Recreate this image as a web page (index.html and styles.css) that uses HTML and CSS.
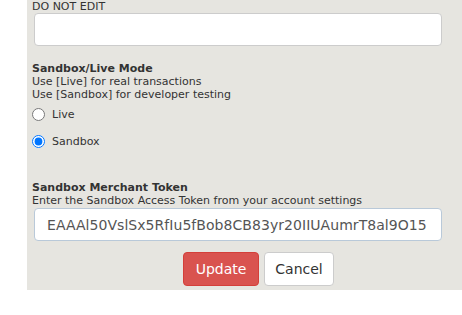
FILE: index.html
```html
<!DOCTYPE html>
<html lang="en">
<head>
    <meta charset="UTF-8">
    <meta name="viewport" content="width=device-width, initial-scale=1.0">
    <title>Payment Settings</title>
    <link rel="stylesheet" href="styles.css">
</head>
<body>
    <div class="settings-panel">
        <form id="settingsForm">
            <div class="field">
                <label class="field-label">DO NOT EDIT</label>
                <input type="text" class="text-input plain" name="hidden_key" value="">
            </div>

            <div class="field mode-field">
                <div class="field-title">Sandbox/Live Mode</div>
                <div class="field-help">Use [Live] for real transactions</div>
                <div class="field-help">Use [Sandbox] for developer testing</div>
                <label class="radio-row first">
                    <input type="radio" name="mode" value="live"> Live
                </label>
                <label class="radio-row">
                    <input type="radio" name="mode" value="sandbox" checked> Sandbox
                </label>
            </div>

            <div class="field token-field">
                <div class="field-title">Sandbox Merchant Token</div>
                <div class="field-help">Enter the Sandbox Access Token from your account settings</div>
                <input type="text" class="text-input token" name="sandbox_token" value="EAAAl50VslSx5RfIu5fBob8CB83yr20IIUAumrT8al9O15">
            </div>

            <div class="button-row">
                <button type="submit" class="update-btn">Update</button>
                <button type="button" class="cancel-btn">Cancel</button>
            </div>
        </form>
    </div>
</body>
</html>
```

FILE: styles.css
```css
body {
    font-family: "DejaVu Sans", Verdana, sans-serif;
    background-color: #fff;
    margin: 0;
    padding: 0;
    color: #333;
}
.settings-panel {
    margin-left: 27px;
    background-color: #e6e5e0;
    padding: 0 20px 0 5px;
    height: 290px;
}
.field-label {
    display: block;
    font-size: 11px;
    line-height: 13px;
    color: #333;
}
.text-input {
    display: block;
    box-sizing: border-box;
    width: 408px;
    margin-left: 2px;
    background-color: #fff;
    border-radius: 4px;
    font-family: "DejaVu Sans", Verdana, sans-serif;
}
.text-input.plain {
    height: 33px;
    margin-top: 0;
    border: 1px solid #ccc;
}
.mode-field {
    margin-top: 16px;
}
.field-title {
    font-size: 11px;
    font-weight: bold;
    line-height: 13px;
    color: #333;
}
.field-help {
    font-size: 11px;
    line-height: 13px;
    color: #333;
}
.radio-row {
    display: flex;
    align-items: center;
    font-size: 11px;
    height: 27px;
    color: #333;
}
.radio-row input {
    margin: 0 7px 0 0;
    width: 13px;
    height: 13px;
}
.radio-row.first {
    margin-top: 0;
}
.token-field {
    margin-top: 26px;
}
.text-input.token {
    height: 33px;
    margin-top: 1px;
    border: 1px solid #b9c9d9;
    padding: 0 12px;
    font-size: 14px;
    letter-spacing: 0.05px;
    color: #555;
}
.button-row {
    display: flex;
    gap: 5px;
    margin-top: 11px;
    margin-left: 151px;
}
.update-btn {
    width: 76px;
    height: 34px;
    padding: 0;
    background-color: #d9534f;
    color: #fff;
    border: 1px solid #d43f3a;
    border-radius: 4px;
    font-family: "DejaVu Sans", Verdana, sans-serif;
    font-size: 14px;
    cursor: pointer;
}
.cancel-btn {
    width: 70px;
    height: 34px;
    padding: 0;
    background-color: #fff;
    color: #333;
    border: 1px solid #ccc;
    border-radius: 4px;
    font-family: "DejaVu Sans", Verdana, sans-serif;
    font-size: 14px;
    cursor: pointer;
}
```
